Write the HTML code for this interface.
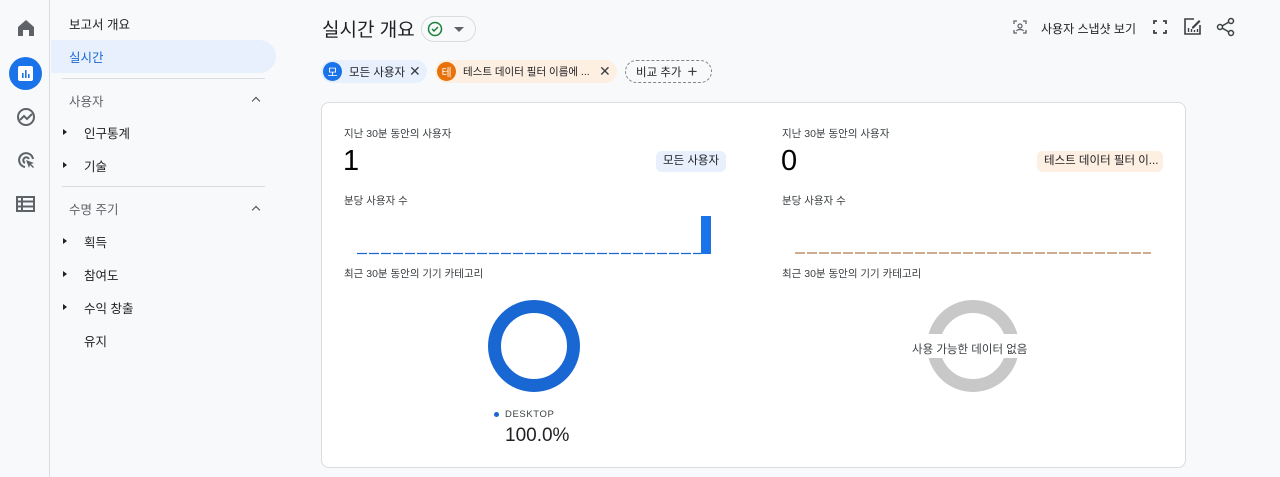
<!DOCTYPE html>
<html><head><meta charset="utf-8"><style>
*{box-sizing:border-box;margin:0;padding:0}
body{width:1280px;height:477px;overflow:hidden;background:#f8f9fa;font-family:"Liberation Sans","Noto Sans CJK KR",sans-serif;color:#202124;position:relative}
.abs{position:absolute;white-space:nowrap}
.rail{left:0;top:0;width:50px;height:477px;border-right:1px solid #dadce0}
.t13{font-size:12.5px}
.sep{position:absolute;left:62px;width:203px;height:1px;background:#dadce0}
.tri{position:absolute;left:63px;width:0;height:0;border-left:4px solid #202124;border-top:3.5px solid transparent;border-bottom:3.5px solid transparent}
.chev{position:absolute;left:253px;width:6px;height:6px;border-left:1.5px solid #444;border-top:1.5px solid #444;transform:rotate(45deg)}
.chip{position:absolute;top:60px;height:23px;border-radius:12px;font-size:11.5px;display:flex;align-items:center;white-space:nowrap}
.av{width:19px;height:19px;border-radius:50%;color:#fff;font-size:11px;display:flex;align-items:center;justify-content:center;margin-left:2px;margin-right:7px;flex:none}
.card{left:321px;top:102px;width:865px;height:366px;background:#fff;border:1px solid #dadce0;border-radius:8px}
.lbl{font-size:10.5px;color:#3c4043}
.big{font-size:29px;font-weight:300;color:#000}
.tag{position:absolute;height:21px;border-radius:6px;font-size:11.5px;padding:0 7px;line-height:21px;white-space:nowrap}
</style></head><body>
<div class="abs rail">
 <svg class="abs" style="left:16px;top:19px" width="20" height="18" viewBox="0 0 20 18"><path d="M10 1L2 8v9h5v-6h6v6h5V8z" fill="#5f6368"/></svg>
 <div class="abs" style="left:9px;top:57px;width:33px;height:33px;border-radius:50%;background:#1a73e8"></div>
 <svg class="abs" style="left:17px;top:65px" width="17" height="17" viewBox="0 0 17 17"><rect x="1" y="1" width="15" height="15" rx="2" fill="#fff"/><rect x="5" y="8" width="1.6" height="5" fill="#1a73e8"/><rect x="8" y="5" width="1.6" height="8" fill="#1a73e8"/><rect x="11" y="9" width="1.6" height="4" fill="#1a73e8"/></svg>
 <svg class="abs" style="left:16px;top:107px" width="20" height="20" viewBox="0 0 20 20"><circle cx="10" cy="10" r="8" fill="none" stroke="#5f6368" stroke-width="2"/><path d="M4 13l4-4 3 3 5-5" fill="none" stroke="#5f6368" stroke-width="2"/></svg>
 <svg class="abs" style="left:16px;top:150px" width="20" height="20" viewBox="0 0 20 20"><path d="M9 17a7 7 0 1 1 8-8" fill="none" stroke="#5f6368" stroke-width="2"/><path d="M9 13a3 3 0 1 1 4-4" fill="none" stroke="#5f6368" stroke-width="2"/><path d="M10 10l8 3-3 1 3 3-1 1-3-3-1 3z" fill="#5f6368"/></svg>
 <svg class="abs" style="left:16px;top:196px" width="19" height="16" viewBox="0 0 19 16"><rect x="1" y="1" width="17" height="14" fill="none" stroke="#5f6368" stroke-width="2"/><path d="M1 5.5h17M1 10.5h17M6 1v14" stroke="#5f6368" stroke-width="2"/></svg>
</div>
<div class="abs t13" style="left:69px;top:14px">보고서 개요</div>
<div class="abs" style="left:51px;top:40px;width:225px;height:33px;background:#e8f0fe;border-radius:0 17px 17px 0"></div>
<div class="abs t13" style="left:69px;top:47px;color:#1967d2">실시간</div>
<div class="sep" style="top:78px"></div>
<div class="abs t13" style="left:69px;top:91px;color:#5f6368">사용자</div><div class="chev" style="top:98px"></div>
<div class="tri" style="top:129px"></div><div class="abs t13" style="left:84px;top:123px">인구통계</div>
<div class="tri" style="top:162px"></div><div class="abs t13" style="left:84px;top:156px">기술</div>
<div class="sep" style="top:186px"></div>
<div class="abs t13" style="left:69px;top:199px;color:#5f6368">수명 주기</div><div class="chev" style="top:207px"></div>
<div class="tri" style="top:238px"></div><div class="abs t13" style="left:84px;top:232px">획득</div>
<div class="tri" style="top:271px"></div><div class="abs t13" style="left:84px;top:265px">참여도</div>
<div class="tri" style="top:304px"></div><div class="abs t13" style="left:84px;top:298px">수익 창출</div>
<div class="abs t13" style="left:84px;top:331px">유지</div>

<div class="abs" style="left:322px;top:15px;font-size:19px">실시간 개요</div>
<div class="abs" style="left:421px;top:16px;width:55px;height:26px;border:1px solid #dadce0;border-radius:13px"></div>
<svg class="abs" style="left:427px;top:21px" width="16" height="16" viewBox="0 0 16 16"><circle cx="8" cy="8" r="6.5" fill="none" stroke="#188038" stroke-width="1.5"/><path d="M5 8l2 2 4-4" fill="none" stroke="#188038" stroke-width="1.5"/></svg>
<div class="abs" style="left:454px;top:27px;border-left:5px solid transparent;border-right:5px solid transparent;border-top:5px solid #5f6368"></div>

<div class="chip" style="left:321px;width:106px;background:#e8f0fe"><div class="av" style="background:#1a73e8">모</div>모든 사용자<span style="position:absolute;left:88px;font-size:14px;color:#3c4043">✕</span></div>
<div class="chip" style="left:435px;width:182px;background:#feefe3;font-size:10.5px"><div class="av" style="background:#e8710a">테</div>테스트 데이터 필터 이름에 ...<span style="position:absolute;left:164px;font-size:14px;color:#3c4043">✕</span></div>
<div class="chip" style="left:625px;width:87px;border:1px dashed #80868b;padding-left:10px">비교 추가 <span style="margin-left:6px;font-size:17px;color:#3c4043">+</span></div>

<svg class="abs" style="left:1013px;top:20px" width="14" height="14" viewBox="0 0 14 14"><path d="M1 4V1h3M10 1h3v3M13 10v3h-3M4 13H1v-3" fill="none" stroke="#5f6368" stroke-width="1.3"/><circle cx="7" cy="6" r="2" fill="none" stroke="#5f6368" stroke-width="1.2"/><path d="M3.5 11c1-2 6-2 7 0" fill="none" stroke="#5f6368" stroke-width="1.2"/></svg>
<div class="abs" style="left:1041px;top:20px;font-size:12px">사용자 스냅샷 보기</div>
<svg class="abs" style="left:1153px;top:20px" width="14" height="14" viewBox="0 0 14 14"><path d="M1 4V1h3M10 1h3v3M13 10v3h-3M4 13H1v-3" fill="none" stroke="#3c4043" stroke-width="1.8"/></svg>
<svg class="abs" style="left:1183px;top:17px" width="19" height="19" viewBox="0 0 19 19"><path d="M11 2H2v15h15V8" fill="none" stroke="#3c4043" stroke-width="1.6"/><path d="M9 10l7-7 1.5 1.5-7 7H9z" fill="#3c4043"/><path d="M5.5 15v-4M8.5 15v-3M11.5 15v-2M14.5 15v-3" stroke="#3c4043" stroke-width="1.4"/></svg>
<svg class="abs" style="left:1216px;top:17px" width="20" height="20" viewBox="0 0 20 20"><circle cx="15" cy="4" r="2.5" fill="none" stroke="#3c4043" stroke-width="1.5"/><circle cx="4" cy="10" r="2.5" fill="none" stroke="#3c4043" stroke-width="1.5"/><circle cx="15" cy="16" r="2.5" fill="none" stroke="#3c4043" stroke-width="1.5"/><path d="M6 9l7-4M6 11l7 4" stroke="#3c4043" stroke-width="1.5"/></svg>

<div class="abs card"></div>

<div class="abs lbl" style="left:344px;top:126px">지난 30분 동안의 사용자</div>
<div class="abs big" style="left:343px;top:145px">1</div>
<div class="tag" style="left:656px;top:151px;background:#e8f0fe">모든 사용자</div>
<div class="abs lbl" style="left:344px;top:193px">분당 사용자 수</div>
<svg class="abs" style="left:355px;top:214px" width="360" height="42"><line x1="2" y1="39.5" x2="346" y2="39.5" stroke="#1967d2" stroke-width="1.2" stroke-dasharray="10 2"/><rect x="346" y="2" width="10" height="38" fill="#1a73e8"/></svg>
<div class="abs lbl" style="left:344px;top:266px">최근 30분 동안의 기기 카테고리</div>
<svg class="abs" style="left:484px;top:296px" width="100" height="100"><circle cx="50" cy="50" r="39.5" fill="none" stroke="#1967d2" stroke-width="13"/></svg>
<div class="abs" style="left:494px;top:412px;width:5px;height:5px;border-radius:50%;background:#1967d2"></div>
<div class="abs" style="left:505px;top:409px;font-size:9.5px;letter-spacing:.6px;color:#3c4043">DESKTOP</div>
<div class="abs" style="left:505px;top:425px;font-size:19px">100.0%</div>

<div class="abs lbl" style="left:782px;top:126px">지난 30분 동안의 사용자</div>
<div class="abs big" style="left:781px;top:145px">0</div>
<div class="tag" style="left:1037px;top:151px;width:126px;overflow:hidden;background:#feefe3">테스트 데이터 필터 이...</div>
<div class="abs lbl" style="left:782px;top:193px">분당 사용자 수</div>
<svg class="abs" style="left:793px;top:250px" width="362" height="6"><line x1="2" y1="3" x2="358" y2="3" stroke="#b27a4a" stroke-width="1.2" stroke-dasharray="10 2"/></svg>
<div class="abs lbl" style="left:782px;top:266px">최근 30분 동안의 기기 카테고리</div>
<svg class="abs" style="left:923px;top:296px" width="100" height="100"><circle cx="50" cy="50" r="39.5" fill="none" stroke="#c8c8c8" stroke-width="13"/><rect x="0" y="38" width="100" height="24" fill="#fff"/></svg>
<div class="abs" style="left:912px;top:341px;font-size:11.5px;color:#3c4043">사용 가능한 데이터 없음</div>
</body></html>
